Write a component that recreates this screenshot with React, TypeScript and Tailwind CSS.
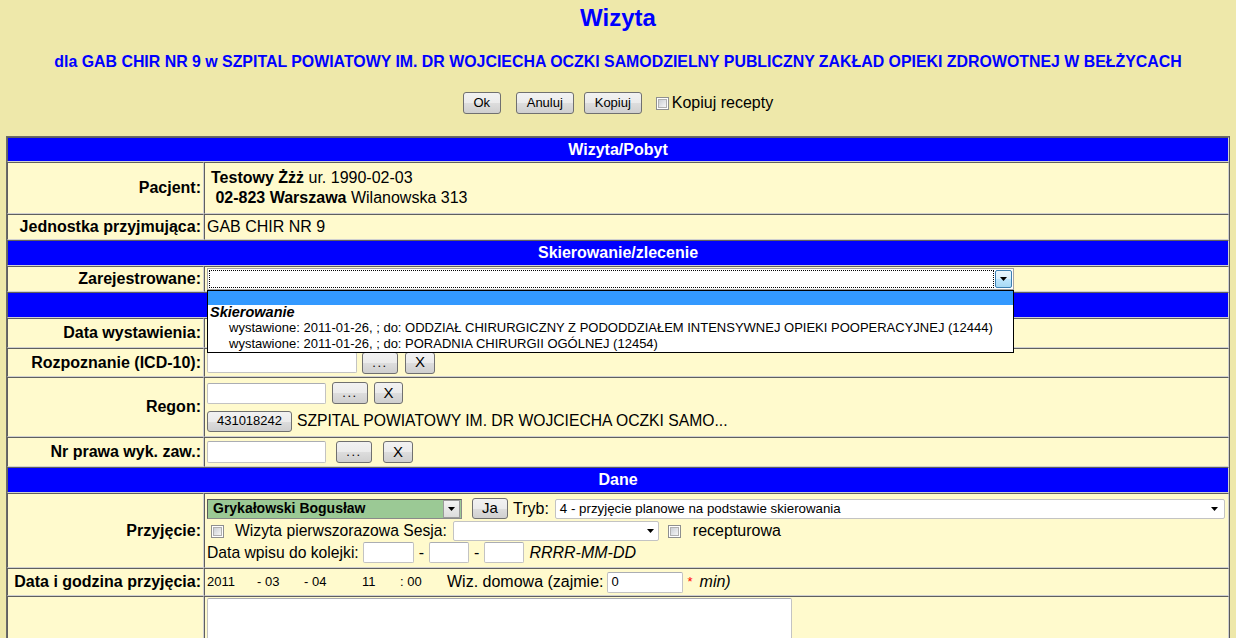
import React from 'react';

const btn =
  "border border-[#707070] rounded-[3px] bg-[linear-gradient(#f2f2f2_0%,#ebebeb_50%,#dddddd_51%,#cfcfcf_100%)] text-black flex items-center justify-center shrink-0";
const input = "border border-[#c3c3c3] border-t-[#abadb3] rounded-[2px] bg-white shrink-0";

function Tri() {
  return (
    <svg width="7" height="4" viewBox="0 0 7 4" className="block">
      <path d="M0 0h7L3.5 4z" fill="#000" />
    </svg>
  );
}

function Checkbox() {
  return (
    <span className="inline-flex w-[13px] h-[13px] border border-[#8e8f8f] bg-white p-[1px] shrink-0">
      <span className="flex-1 bg-[linear-gradient(135deg,#cbcfd5,#f6f6f6)] border border-[#b0b0b0]" />
    </span>
  );
}

function Header({ text, h }: { text?: string; h: string }) {
  return (
    <div
      className={`${h} border border-t-[#5f5f5f] border-l-[#5f5f5f] border-b-[#d0d0d0] border-r-[#d0d0d0] bg-[#0000ff] text-white font-bold text-[16px] flex items-center justify-center`}
    >
      {text}
    </div>
  );
}

function Row({
  label,
  h,
  children,
  top,
}: {
  label: string;
  h: string;
  children?: React.ReactNode;
  top?: boolean;
}) {
  return (
    <div className={`flex ${h}`}>
      <div className="w-[197px] shrink-0 border border-t-[#5f5f5f] border-l-[#5f5f5f] border-b-[#d0d0d0] border-r-[#d0d0d0] bg-[#fffacd] flex items-center justify-end pr-[2px] font-bold text-[16px] whitespace-nowrap">
        {label}
      </div>
      <div
        className={`flex-1 min-w-0 border border-t-[#5f5f5f] border-l-[#5f5f5f] border-b-[#d0d0d0] border-r-[#d0d0d0] bg-[#fffacd] flex ${top ? 'items-start' : 'items-center'} pl-[2px] text-[16px]`}
      >
        {children}
      </div>
    </div>
  );
}

export default function App() {
  return (
    <div className="h-[638px] overflow-hidden bg-[#eee8aa] font-['Liberation_Sans',Arial,sans-serif] text-black">
      <div className="h-[36px] flex items-center justify-center text-[24px] font-bold text-[#0000ff]">Wizyta</div>
      <div className="h-[52px] flex items-center justify-center text-[15.9px] font-bold text-[#0000ff] whitespace-nowrap">
        dla GAB CHIR NR 9 w SZPITAL POWIATOWY IM. DR WOJCIECHA OCZKI SAMODZIELNY PUBLICZNY ZAKŁAD OPIEKI ZDROWOTNEJ W BEŁŻYCACH
      </div>
      <div className="h-[30px] flex items-center justify-center">
        <div className={`${btn} w-[38px] h-[22px] text-[13px]`}>Ok</div>
        <div className={`${btn} w-[58px] h-[22px] text-[13px] ml-[15px]`}>Anuluj</div>
        <div className={`${btn} w-[58px] h-[22px] text-[13px] ml-[10px]`}>Kopiuj</div>
        <span className="ml-[14px]">
          <Checkbox />
        </span>
        <span className="ml-[3px] text-[16px]">Kopiuj recepty</span>
      </div>

      <div className="mt-[18px] ml-[6px] w-[1224px] border border-t-[#6a6a6a] border-l-[#6a6a6a] border-b-[#5a5a5a] border-r-[#5a5a5a]">
        <Header text="Wizyta/Pobyt" h="h-[25px]" />
        <Row label="Pacjent:" h="h-[52px]">
          <div className="pl-[4px] leading-[20px]">
            <div>
              <b>Testowy Żżż</b> ur. 1990-02-03
            </div>
            <div>
              <b>&nbsp;02-823 Warszawa</b> Wilanowska 313
            </div>
          </div>
        </Row>
        <Row label="Jednostka przyjmująca:" h="h-[26px]">
          GAB CHIR NR 9
        </Row>
        <Header text="Skierowanie/zlecenie" h="h-[26px]" />
        <Row label="Zarejestrowane:" h="h-[26px]">
          <div className="relative z-10">
            <div className="w-[807px] h-[22px] border border-[#a5a5a5] bg-white flex items-stretch p-[1px]">
              <div className="flex-1 border border-dotted border-black mr-[1px]" />
              <div className="w-[17px] border border-[#3c7fb1] rounded-[2px] bg-[linear-gradient(#eaf6fd,#d9f0fc_50%,#bee6fd_51%,#a7d9f5)] flex items-center justify-center">
                <Tri />
              </div>
            </div>
            <div className="absolute left-0 top-[22px] w-[807px] bg-white border border-black text-[13px] whitespace-nowrap">
              <div className="h-[14px] bg-[#3399ff]" />
              <div className="h-[15px] leading-[15px] pl-[2px] font-bold italic text-[14.5px]">Skierowanie</div>
              <div className="h-[16px] leading-[16px] pl-[21px]">
                wystawione: 2011-01-26, ; do: ODDZIAŁ CHIRURGICZNY Z PODODDZIAŁEM INTENSYWNEJ OPIEKI POOPERACYJNEJ (12444)
              </div>
              <div className="h-[16px] leading-[16px] pl-[21px]">
                wystawione: 2011-01-26, ; do: PORADNIA CHIRURGII OGÓLNEJ (12454)
              </div>
            </div>
          </div>
        </Row>
        <Header h="h-[26px]" />
        <Row label="Data wystawienia:" h="h-[30px]" />
        <Row label="Rozpoznanie (ICD-10):" h="h-[29px]">
          <div className={`${input} w-[150px] h-[21px]`} />
          <div className={`${btn} w-[36px] h-[22px] ml-[5px] text-[13px] tracking-[1.5px]`}>...</div>
          <div className={`${btn} w-[30px] h-[22px] ml-[7px] text-[15px]`}>X</div>
        </Row>
        <Row label="Regon:" h="h-[60px]">
          <div className="flex flex-col gap-[6px]">
            <div className="flex items-center h-[22px]">
              <div className={`${input} w-[119px] h-[21px]`} />
              <div className={`${btn} w-[36px] h-[22px] ml-[6px] text-[13px] tracking-[1.5px]`}>...</div>
              <div className={`${btn} w-[29px] h-[22px] ml-[6px] text-[15px]`}>X</div>
            </div>
            <div className="flex items-center h-[22px]">
              <div className={`${btn} w-[85px] h-[21px] text-[13px]`}>431018242</div>
              <span className="ml-[5px] whitespace-nowrap text-[15.7px]">SZPITAL POWIATOWY IM. DR WOJCIECHA OCZKI SAMO...</span>
            </div>
          </div>
        </Row>
        <Row label="Nr prawa wyk. zaw.:" h="h-[30px]">
          <div className={`${input} w-[119px] h-[22px]`} />
          <div className={`${btn} w-[36px] h-[22px] ml-[10px] text-[13px] tracking-[1.5px]`}>...</div>
          <div className={`${btn} w-[30px] h-[22px] ml-[11px] text-[15px]`}>X</div>
        </Row>
        <Header text="Dane" h="h-[26px]" />
        <Row label="Przyjęcie:" h="h-[75px]">
          <div className="flex-1 flex flex-col whitespace-nowrap">
            <div className="h-[22px] flex items-center">
              <div className="w-[255px] h-[20px] border border-[#8a8a8a] border-t-[#5a5a5a] border-l-[#5a5a5a] bg-[#9bc995] flex items-center shrink-0">
                <span className="flex-1 pl-[5px] font-bold text-[14px]">Grykałowski Bogusław</span>
                <span className="w-[17px] h-[18px] mr-[1px] border border-[#9a9a9a] bg-[linear-gradient(#f2f2f2,#dcdcdc)] flex items-center justify-center">
                  <Tri />
                </span>
              </div>
              <div className={`${btn} w-[36px] h-[21px] ml-[10px] text-[15px]`}>Ja</div>
              <span className="ml-[5px]">Tryb:</span>
              <div className="ml-[6px] mr-[3px] flex-1 h-[20px] border border-[#c3c3c3] rounded-[2px] bg-white flex items-center pl-[4px] pr-[6px] text-[13.3px]">
                <span className="flex-1">4 - przyjęcie planowe na podstawie skierowania</span>
                <Tri />
              </div>
            </div>
            <div className="h-[22px] flex items-center">
              <span className="ml-[4px]">
                <Checkbox />
              </span>
              <span className="ml-[11px] text-[15.7px]">Wizyta pierwszorazowa Sesja:</span>
              <div className="ml-[6px] w-[206px] h-[20px] border border-[#c3c3c3] rounded-[2px] bg-white flex items-center justify-end pr-[4px]">
                <Tri />
              </div>
              <span className="ml-[9px]">
                <Checkbox />
              </span>
              <span className="ml-[12px]">recepturowa</span>
            </div>
            <div className="h-[22px] flex items-center">
              <span className="text-[15.7px]">Data wpisu do kolejki:</span>
              <div className={`${input} w-[51px] h-[21px] ml-[4px]`} />
              <span className="mx-[5px]">-</span>
              <div className={`${input} w-[40px] h-[21px]`} />
              <span className="mx-[5px]">-</span>
              <div className={`${input} w-[40px] h-[21px]`} />
              <span className="ml-[5px] italic">RRRR-MM-DD</span>
            </div>
          </div>
        </Row>
        <Row label="Data i godzina przyjęcia:" h="h-[28px]">
          <div className="flex items-center whitespace-nowrap">
            <span className="w-[50px] text-[13px]">2011</span>
            <span className="w-[47px] text-[13px]">- 03</span>
            <span className="w-[58px] text-[13px]">- 04</span>
            <span className="w-[38px] text-[13px]">11</span>
            <span className="w-[47px] text-[13px]">: 00</span>
            <span>Wiz. domowa (zajmie:</span>
            <div className={`${input} w-[76px] h-[21px] ml-[4px] text-[13px] pl-[3px] flex items-center`}>0</div>
            <span className="ml-[4px] text-[#ff0000] text-[13px]">*</span>
            <span className="ml-[7px] italic">min)</span>
          </div>
        </Row>
        <Row label="" h="h-[80px]" top>
          <div className={`${input} w-[585px] h-[70px] mt-[1px]`} />
        </Row>
      </div>
    </div>
  );
}
